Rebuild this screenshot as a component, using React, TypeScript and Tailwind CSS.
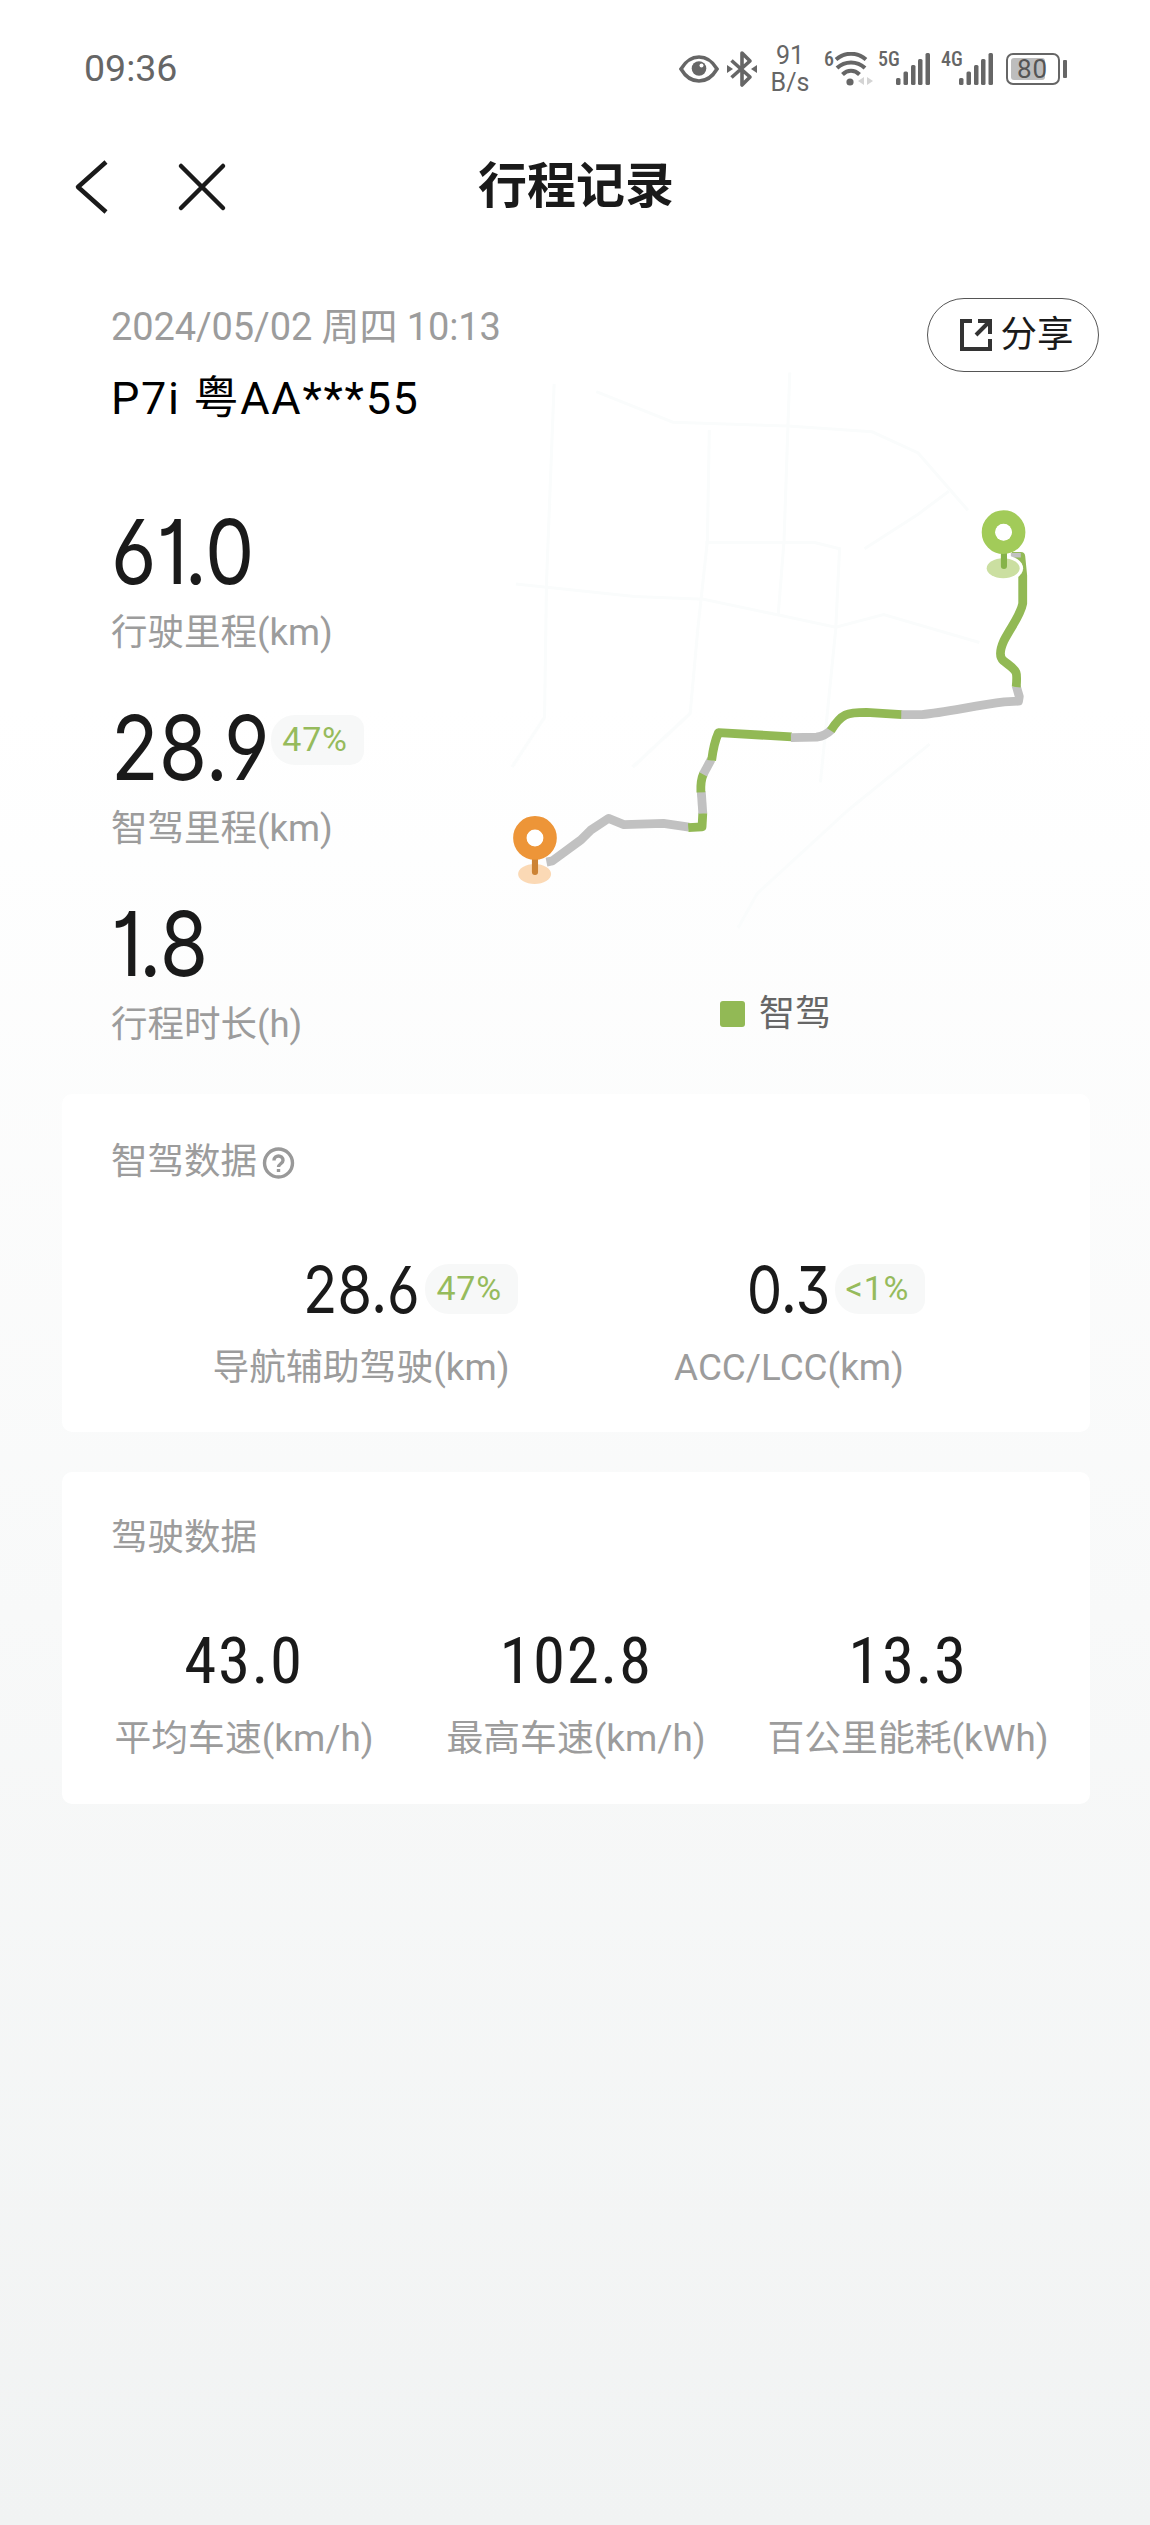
import type { ReactNode } from "react";

type Stat = {
  value: string;
  label: string;
  percent?: string;
};

const tripStats: Stat[] = [
  { value: "61.0", label: "行驶里程(km)" },
  { value: "28.9", label: "智驾里程(km)", percent: "47%" },
  { value: "1.8", label: "行程时长(h)" },
];

const assistStats: Stat[] = [
  { value: "28.6", label: "导航辅助驾驶(km)", percent: "47%" },
  { value: "0.3", label: "ACC/LCC(km)", percent: "<1%" },
];

const driveStats: Stat[] = [
  { value: "43.0", label: "平均车速(km/h)" },
  { value: "102.8", label: "最高车速(km/h)" },
  { value: "13.3", label: "百公里能耗(kWh)" },
];

const GREEN = "#92b955";
const GRAY = "#c1c1c1";

function PercentBadge({ children }: { children: ReactNode }) {
  return (
    <span className="block h-[50px] rounded-l-[24px] rounded-r-[14px] bg-[#f7f8f8] pl-[11px] pr-[16px] text-[34px] leading-[48px] tracking-[0.8px] text-[#96bb5c]">
      {children}
    </span>
  );
}

function SignalBars() {
  return (
    <svg className="h-[32px] w-[35px]" viewBox="0 0 35 32" fill="#666">
      <rect x="0" y="25" width="4.5" height="7" rx="1.5" />
      <rect x="7.5" y="18.5" width="4.5" height="13.5" rx="1.5" />
      <rect x="15" y="12" width="4.5" height="20" rx="1.5" />
      <rect x="22" y="6" width="4.5" height="26" rx="1.5" />
      <rect x="29.5" y="0" width="4.5" height="32" rx="1.5" />
    </svg>
  );
}

function StatusBar() {
  return (
    <div className="flex h-[137px] items-center justify-between pl-[84px] pr-[83px] text-[#666]">
      <span className="text-[37.5px] font-stretch-[97%]">09:36</span>
      <div className="flex items-center">
        {/* Œil */}
        <svg className="h-[28px] w-[40px]" viewBox="0 0 40 28" fill="none">
          <path d="M2 14C7 5.5 13 2 20 2s13 3.500 18 12c-5 8.500-11 12-18 12S7 22.500 2 14z" stroke="#666" strokeWidth="3.6" />
          <circle cx="20" cy="13.500" r="7.300" fill="#666" />
          <circle cx="22.500" cy="10.500" r="2" fill="#fff" />
        </svg>
        {/* Bluetooth */}
        <svg className="ml-[8px] h-[38px] w-[30px]" viewBox="0 0 30 38" fill="none">
          <path d="M4.500 10.500L23 27 15 35V3l8 8L4.500 27.500" stroke="#666" strokeWidth="3.600" strokeLinejoin="round" />
          <path d="M0 15l6 4-6 4zM30 15l-6 4 6 4z" fill="#666" />
        </svg>
        <div className="ml-[14px] flex w-[38px] flex-col items-center text-[25px] leading-[27px]">
          <span>91</span>
          <span>B/s</span>
        </div>
        <span className="-mt-[20px] ml-[15px] text-[20px] leading-[20px] font-medium font-stretch-[75%]">6</span>
        {/* Wifi */}
        <svg className="h-[34px] w-[40px]" viewBox="0 0 40 34" fill="none">
          <path d="M2 7.500C11-.2 23-.2 32 7.500" stroke="#666" strokeWidth="4" />
          <path d="M3 16c8-7.500 20-7.500 28 0" stroke="#666" strokeWidth="4" />
          <path d="M8.500 22.500c5-5 12-5 17 0" stroke="#666" strokeWidth="4" />
          <circle cx="16" cy="30" r="3.600" fill="#666" />
          <path d="M30 25v8l-6-4zM33 25v8l6-4z" fill="#d4d4d4" />
        </svg>
        <span className="-mt-[20px] ml-[4px] w-[18px] text-[20px] leading-[20px] font-medium font-stretch-[75%]">5G</span>
        <SignalBars />
        <span className="-mt-[20px] ml-[10px] w-[18px] text-[20px] leading-[20px] font-medium font-stretch-[75%]">4G</span>
        <SignalBars />
        {/* Batterie */}
        <div className="ml-[12px] flex h-[32px] w-[54px] items-center rounded-[7px] border-[2.500px] border-[#666] p-[3px]">
          <div className="flex h-full w-[34px] items-center rounded-[3px] bg-[#bdbdbd] pl-[6px] text-[26px] leading-[20px] tracking-[1px] text-[#555]">
            80
          </div>
        </div>
        <div className="ml-[3px] h-[18px] w-[4px] rounded-[1px] bg-[#666]" />
      </div>
    </div>
  );
}

function NavBar() {
  return (
    <div className="grid h-[98px] grid-cols-3 items-center px-[75px] pt-px">
      <div className="-ml-px flex items-center gap-[69px]">
        <svg className="h-[54px] w-[34px]" viewBox="0 0 34 54" fill="none" stroke="#1a1a1a" strokeWidth="4.500">
          <path d="M32 2L4 27l28 25" strokeLinejoin="round" />
        </svg>
        <svg className="h-[50px] w-[50px]" viewBox="0 0 50 50" fill="none" stroke="#1a1a1a" strokeWidth="4.500" strokeLinecap="round">
          <path d="M4 4l42 42M46 4L4 46" />
        </svg>
      </div>
      <h1 className="pl-[2px] text-center text-[49px] leading-[60px] font-bold text-[#1a1a1a]">行程记录</h1>
    </div>
  );
}

function RouteMap() {
  return (
    <svg className="h-[589px] w-[600px]" viewBox="0 29 1566 1537" fill="none">
      {/* Routes en arrière-plan */}
      <g stroke="#fafcfc" strokeWidth="8">
        <path d="M170 60L150 580 145 930 60 1060" />
        <path d="M70 582L380 615 560 622 750 662 905 695 1030 662 1280 735" />
        <path d="M280 80L480 160 780 170 1000 185 1120 240 1250 390" />
        <path d="M575 180L570 470 545 700 525 920 375 1060" />
        <path d="M785 30L770 470 755 660M565 474H850L915 490 905 700 885 900 865 1100" />
        <path d="M1200 340L1120 400 980 490M1150 1000L940 1170 700 1390 650 1480" />
      </g>

      {/* Trajet */}
      <g strokeWidth="23" strokeLinejoin="round">
        <path d="M150 1308L165 1305 240 1250 265 1225 312 1194 352 1210 455 1207 522 1217" stroke={GRAY} />
        <path d="M520 1218L556 1216 558 1180" stroke={GREEN} />
        <path d="M558 1181L554 1124" stroke={GRAY} />
        <path d="M553 1126C552 1105 553 1092 560 1077" stroke={GREEN} />
        <path d="M559 1079L580 1040" stroke={GRAY} />
        <path d="M581 1043C584 1018 590 990 599 970L790 981" stroke={GREEN} />
        <path d="M788 983L855 982Q878 978 894 962" stroke={GRAY} />
        <path d="M892 965C920 920 935 917 985 917L1078 923" stroke={GREEN} />
        <path d="M1076 923H1130C1190 918 1265 900 1345 890L1382 888 1384 876 1376 848" stroke={GRAY} />
        <path d="M1376 851C1380 805 1378 810 1342 782Q1327 768 1344 730C1365 690 1387 665 1393 633V560L1388 510H1365" stroke={GREEN} />
        <path d="M1362 507H1388" stroke={GRAY} strokeWidth="12" />
      </g>

      {/* Départ */}
      <ellipse cx="119" cy="1339" rx="43" ry="26" fill="#fbd9b5" />
      <path d="M120 1290V1334" stroke="#cc8335" strokeWidth="16" strokeLinecap="round" />
      <circle cx="120" cy="1245" r="39" stroke="#ed9538" strokeWidth="36" />
      <circle cx="120" cy="1245" r="22" fill="#fff" />

      {/* Arrivée */}
      <ellipse cx="1342" cy="541" rx="52" ry="34" fill="#fff" />
      <ellipse cx="1342" cy="541" rx="43" ry="26" fill="#cbdfa1" />
      <path d="M1344 492V535" stroke="#86b349" strokeWidth="16" strokeLinecap="round" />
      <circle cx="1343" cy="447" r="39" stroke="#a2cb59" strokeWidth="36" />
      <circle cx="1343" cy="447" r="22" fill="#fff" />
    </svg>
  );
}

function TripSummary() {
  return (
    <div className="flex h-[859px] pl-[111px]">
      <div className="w-[378px] pt-[67px] whitespace-nowrap">
        <p className="text-[38px] leading-[50px] tracking-[-0.1px] text-[#9c9c9c]">2024/05/02 周四 10:13</p>
        <p className="mt-[17px] text-[45px] leading-[60px] tracking-[1.7px] text-black">P7i 粤AA***55</p>
        <div className="mt-[78px] flex flex-col gap-[46px]">
          {tripStats.map((stat) => (
            <div key={stat.label} className="h-[150px]">
              <div className="flex h-[90px]">
                <span className="w-fit origin-left scale-x-[0.88] font-['Inter'] text-[89px] leading-[90px] text-[#1a1a1a] [font-feature-settings:'ss01','cv01','cv09']">
                  {stat.value}
                </span>
                {stat.percent && (
                  <div className="-ml-[20px] pt-[12px]">
                    <PercentBadge>{stat.percent}</PercentBadge>
                  </div>
                )}
              </div>
              <p className="mt-[12px] text-[36.500px] leading-[48px] text-[#9c9c9c]">{stat.label}</p>
            </div>
          ))}
        </div>
      </div>

      <div className="w-[610px] pt-[63px]">
        <button className="ml-auto flex h-[74px] w-[172px] items-center justify-center gap-[8px] rounded-full border-[1.500px] border-[#555] pl-[6px] text-[36.500px] leading-[48px] text-[#1a1a1a]">
          <svg className="h-[34px] w-[34px]" viewBox="0 0 34 34" fill="none" stroke="#333" strokeWidth="4">
            <path d="M13 3H3v28h28V21" />
            <path d="M19 3h12v13M31 3L17 17" />
          </svg>
          分享
        </button>
        <RouteMap />
        <div className="mt-[33px] flex h-[40px] items-center gap-[14px] pl-[231px] text-[36px] leading-[40px] text-[#666]">
          <span className="h-[26px] w-[25px] rounded-[3px] bg-[#92b955]" />
          智驾
        </div>
      </div>
    </div>
  );
}

export default function App() {
  return (
    <div className="h-[2525px] w-[1150px] overflow-hidden bg-linear-to-b from-white from-28% via-[#f8f9f9] via-64% to-[#f1f3f3] font-['Roboto','Noto_Sans_CJK_SC',sans-serif]">
      <StatusBar />
      <NavBar />
      <TripSummary />

      <div className="flex flex-col gap-[40px] pl-[62px] pr-[60px]">
        {/* Données de conduite assistée */}
        <section className="h-[338px] rounded-[10px] bg-white pt-[44px]">
          <div className="flex items-center gap-[5px] pl-[49px] text-[36.500px] leading-[48px] text-[#9c9c9c]">
            智驾数据
            <svg className="h-[34px] w-[34px]" viewBox="0 0 34 34" fill="none" stroke="#999" strokeWidth="3.400">
              <circle cx="16.500" cy="18" r="14" />
              <path d="M12 15.500c0-6 9-6 9 0 0 3-4.500 3.500-4.500 6.500" />
              <path d="M16.500 24v3" />
            </svg>
          </div>
          <div className="mt-[72px] grid grid-cols-2 pl-[85px] pr-[87px]">
            {assistStats.map((stat) => (
              <div key={stat.label} className="flex flex-col items-center">
                <div className="relative">
                  <span className="block scale-x-[0.88] font-['Inter'] text-[64px] leading-[64px] text-[#1a1a1a] [font-feature-settings:'ss01','cv01','cv09']">
                    {stat.value}
                  </span>
                  <div className="absolute top-[6px] left-full -ml-[2px]">
                    <PercentBadge>{stat.percent}</PercentBadge>
                  </div>
                </div>
                <p className="mt-[22px] text-[36.800px] leading-[48px] text-[#9c9c9c]">{stat.label}</p>
              </div>
            ))}
          </div>
        </section>

        {/* Données de conduite */}
        <section className="h-[332px] rounded-[10px] bg-white pt-[42px]">
          <div className="pl-[49px] text-[36.500px] leading-[48px] text-[#9c9c9c]">驾驶数据</div>
          <div className="mt-[67px] grid grid-cols-3 px-[16px]">
            {driveStats.map((stat) => (
              <div key={stat.label} className="flex flex-col items-center whitespace-nowrap">
                <span className="text-[65px] leading-[64px] tracking-[1.5px] text-[#1a1a1a] font-stretch-[87%]">{stat.value}</span>
                <p className="mt-[22px] text-[36.800px] leading-[48px] text-[#9c9c9c]">{stat.label}</p>
              </div>
            ))}
          </div>
        </section>
      </div>
    </div>
  );
}
